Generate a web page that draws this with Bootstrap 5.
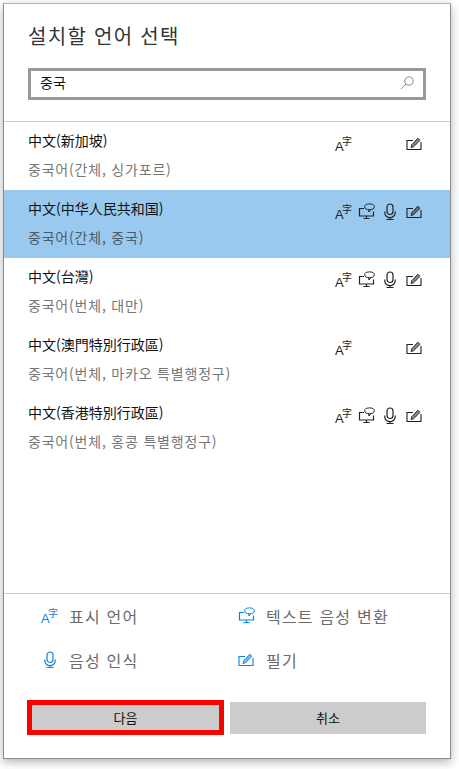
<!DOCTYPE html>
<html lang="ko">
<head>
  <meta charset="UTF-8" />
  <title>설치할 언어 선택</title>
  <link href="https://cdn.jsdelivr.net/npm/bootstrap@5.3.0/dist/css/bootstrap.min.css" rel="stylesheet" />
  <style>
    html, body { height: 769px; overflow: hidden; }
    body { background: #fff; font-family: "Noto Sans CJK KR", "Liberation Sans", sans-serif; padding: 3px 8px 10px 3px; }
    .lang-dialog { height: 756px; width: 448px; background: #fff; border: 1px solid #8c8c8c; border-top-color: #b4b4b4; box-shadow: 0 3px 9px rgba(0,0,0,.3); }
    .dlg-title { font-size: 20px; line-height: 28px; color: #333; margin: 18px 0 0 24px; letter-spacing: 1.3px; font-weight: 400; }
    .search-box { height: 32px; margin: 18px 24px 0 24px; border: 3px solid #999; padding: 0 8px 3px 9px; }
    .search-text { font-size: 14px; color: #111; }
    .lang-list { border-top: 1px solid #ccc; margin-top: 21px; }
    .lang-row { height: 68px; padding: 8px 28px 0 24px; }
    .lang-row.is-selected { background: #99c9ef; }
    .lang-name { font-size: 14px; line-height: 20px; color: #111; }
    .lang-sub { font-size: 14px; line-height: 20px; color: #777; margin-top: 9px; letter-spacing: .8px; }
    .is-selected .lang-sub { color: #4d5a66; }
    .cap-icons { width: 87px; height: 20px; margin-top: 5px; flex: none; color: #222; }
    .cap-slot { width: 18px; height: 18px; }
    .cap-slot svg { display: block; }
    .dlg-foot { border-top: 1px solid #ccc; padding: 0 24px 23px 23px; }
    .legend { padding: 1px 0 0 14px; margin-bottom: 17px; width: 408px; }
    .legend-item { height: 44px; width: 197px; font-size: 16px; letter-spacing: 1.2px; color: #6b6b6b; gap: 10px; padding-bottom: 2px; }
    .legend-item svg { flex: none; color: #0a84e0; }
    .legend-item svg.pen-shift { margin: 0 2px 0 -2px; }
    .btn-row { gap: 6px; }
    .dlg-btn { width: 196px; height: 32px; background: #ccc; border: 0; border-radius: 0; font-size: 13px; color: #111; padding: 0; }
    .dlg-btn.is-focused { width: 197px; height: 35px; border: 5px solid #f00; }
    .ic-txt { font-family: "Liberation Sans", sans-serif; }
    .ic-cjk { font-family: "Noto Sans CJK SC", sans-serif; }
  </style>
</head>
<body>
<svg width="0" height="0" class="position-absolute">
  <defs>
    <symbol id="ic-lang" viewBox="0 0 18 18">
      <text x="0" y="16" font-size="13" fill="currentColor" class="ic-txt">A</text>
      <text x="7" y="10" font-size="10" fill="currentColor" class="ic-cjk">字</text>
    </symbol>
    <symbol id="ic-tts" viewBox="0 0 18 18">
      <path d="M6 5.5H1.5V13H15.5V8.5M8.5 13V15.5M5.5 15.5H11.5" fill="none" stroke="currentColor" stroke-width="1.2"/>
      <ellipse cx="11.5" cy="3.8" rx="4.8" ry="2.9" fill="none" stroke="currentColor" stroke-width="1"/>
      <path d="M10.5 6.5L11 9L13 6.3" fill="none" stroke="currentColor" stroke-width="1"/>
    </symbol>
    <symbol id="ic-mic" viewBox="0 0 18 18">
      <rect x="6" y="1" width="6" height="10.5" rx="3" fill="none" stroke="currentColor" stroke-width="1.2"/>
      <path d="M3.8 8.5V10A5.2 4.6 0 0 0 14.2 10V8.5M9 14.5V16.5M5.5 16.5H12.5" fill="none" stroke="currentColor" stroke-width="1.2"/>
    </symbol>
    <symbol id="ic-pen" viewBox="0 0 18 18">
      <path d="M9 5.5H3V14.5H17V7" fill="none" stroke="currentColor" stroke-width="1.1"/>
      <path d="M7 12.5L7.7 9.8L13.8 3.2L16 5.3L9.6 11.8Z" fill="currentColor" fill-opacity=".55" stroke="currentColor" stroke-width=".9"/>
    </symbol>
  </defs>
</svg>

<div class="lang-dialog d-flex flex-column">
  <h1 class="dlg-title">설치할 언어 선택</h1>
  <div class="search-box d-flex align-items-center justify-content-between">
    <span class="search-text">중국</span>
    <svg width="16" height="16" viewBox="0 0 16 16" fill="none" stroke="#888" stroke-width="1">
      <circle cx="10" cy="6" r="4.2"/>
      <path d="M7 9L2 14"/>
    </svg>
  </div>

  <div class="lang-list flex-grow-1" id="langList"></div>

  <div class="dlg-foot">
    <div class="legend d-flex flex-wrap">
      <div class="legend-item d-flex align-items-center"><svg width="18" height="18"><use href="#ic-lang"/></svg>표시 언어</div>
      <div class="legend-item d-flex align-items-center"><svg width="18" height="18"><use href="#ic-tts"/></svg>텍스트 음성 변환</div>
      <div class="legend-item d-flex align-items-center"><svg width="18" height="18"><use href="#ic-mic"/></svg>음성 인식</div>
      <div class="legend-item d-flex align-items-center"><svg width="18" height="18" class="pen-shift"><use href="#ic-pen"/></svg>필기</div>
    </div>
    <div class="btn-row d-flex align-items-center">
      <button type="button" class="btn dlg-btn is-focused">다음</button>
      <button type="button" class="btn dlg-btn">취소</button>
    </div>
  </div>
</div>

<script>
const langs = [
  ["中文(新加坡)", "중국어(간체, 싱가포르)", 1, 0, 0, 1],
  ["中文(中华人民共和国)", "중국어(간체, 중국)", 1, 1, 1, 1],
  ["中文(台灣)", "중국어(번체, 대만)", 1, 1, 1, 1],
  ["中文(澳門特別行政區)", "중국어(번체, 마카오 특별행정구)", 1, 0, 0, 1],
  ["中文(香港特別行政區)", "중국어(번체, 홍콩 특별행정구)", 1, 1, 1, 1]
];
const ids = ["ic-lang", "ic-tts", "ic-mic", "ic-pen"];
document.getElementById("langList").innerHTML = langs.map((l, i) => {
  const slots = ids.map((id, k) => `<span class="cap-slot">${l[k + 2] ? `<svg width="18" height="18"><use href="#${id}"/></svg>` : ""}</span>`).join("");
  return `<div class="lang-row d-flex justify-content-between ${i === 1 ? "is-selected" : ""}">
    <div><div class="lang-name">${l[0]}</div><div class="lang-sub">${l[1]}</div></div>
    <div class="cap-icons d-flex justify-content-between">${slots}</div>
  </div>`;
}).join("");
</script>
<script src="https://cdn.jsdelivr.net/npm/bootstrap@5.3.0/dist/js/bootstrap.bundle.min.js"></script>
</body>
</html>
